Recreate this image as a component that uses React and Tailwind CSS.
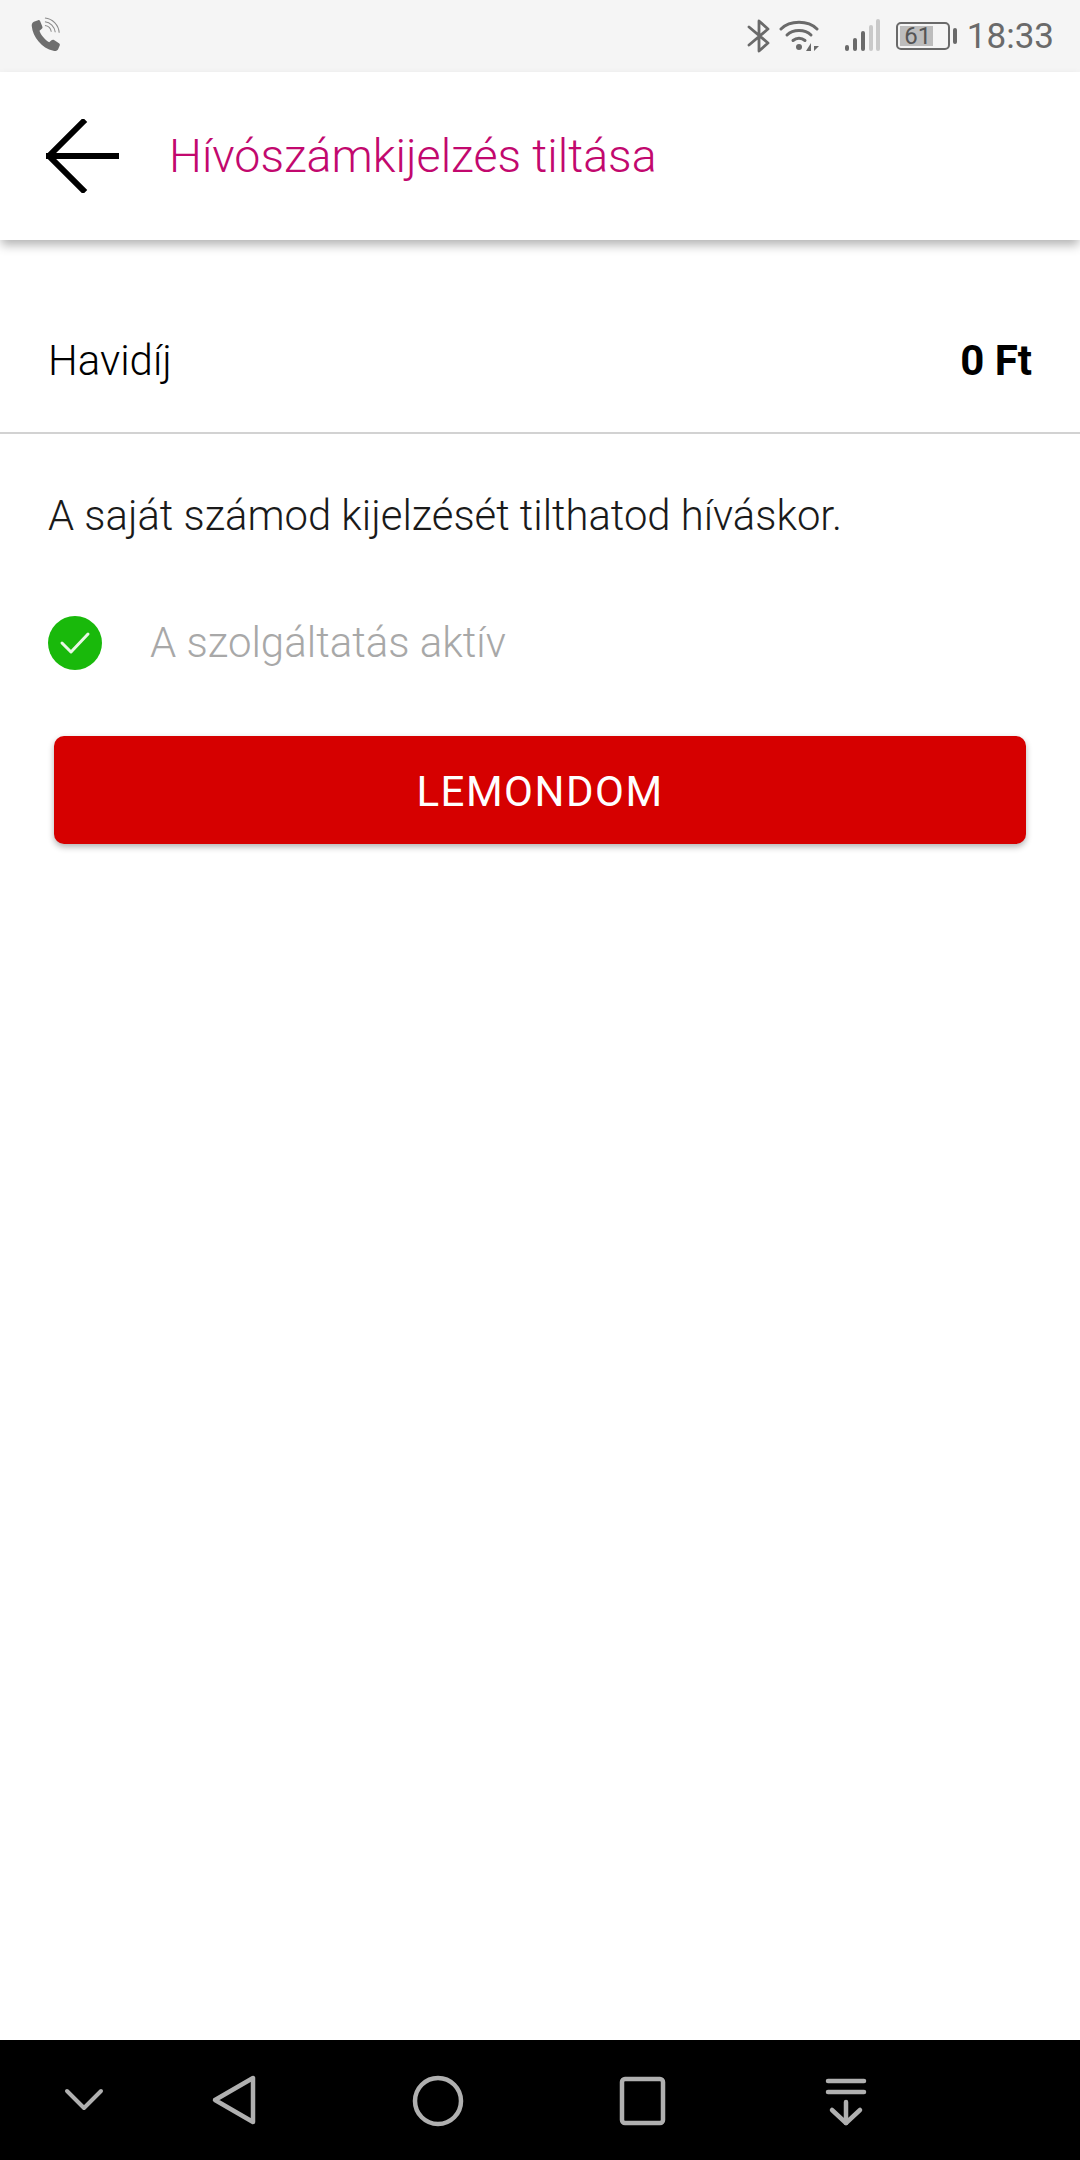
import React from "react";

// Felső állapotsor ikonjai
const CallIcon = () => (
  <svg width="38" height="38" viewBox="0 0 36 36" fill="none">
    <path d="M6.5 4.5 L10.5 3 C11.5 2.7 12 3.2 12.5 4 L14.5 9 C15 10 14.5 10.8 13.8 11.4 L11.8 13 C13 16.8 16.8 21.5 21 24 L23.2 22 C24 21.3 24.8 21.3 25.6 21.8 L30.3 24.8 C31.2 25.4 31.3 26.2 31 27 L29.5 30.5 C28.8 32 27 32.5 25 32 C14 29.5 5.5 19 4.5 8.5 C4.3 6.8 5 5.2 6.5 4.5 Z" fill="#6e6e6e" />
    <path d="M17 8 C20 8.3 22.5 10.5 23 14" stroke="#8a8a8a" strokeWidth="1" />
    <path d="M17 4.5 C22 5 26.2 9 26.8 14.5" stroke="#8a8a8a" strokeWidth="1" />
    <path d="M17 1 C24 1.5 30 7.5 30.5 15" stroke="#8a8a8a" strokeWidth="1" />
  </svg>
);

const BluetoothIcon = () => (
  <svg width="24" height="36" viewBox="0 0 24 36" fill="none" stroke="#6a6a6a" strokeWidth="2.8" strokeLinejoin="round" strokeLinecap="round">
    <path d="M2 9 L21 25 L12 33 L12 3 L21 11 L2 27" />
  </svg>
);

const WifiIcon = () => (
  <svg width="42" height="34" viewBox="0 0 42 34" fill="none">
    <path d="M2 10 C11 1 29 1 38 10" stroke="#6a6a6a" strokeWidth="3" strokeLinecap="round" />
    <path d="M8 16 C14 10 26 10 32 16" stroke="#6a6a6a" strokeWidth="3" strokeLinecap="round" />
    <path d="M14 21.5 C17.5 18.5 22.5 18.5 26 21.5" stroke="#6a6a6a" strokeWidth="3" strokeLinecap="round" />
    <circle cx="20" cy="28" r="3" fill="#6a6a6a" />
    <path d="M32 24 V32 H27 Z" fill="#6a6a6a" />
    <path d="M35 24 V32 L40 27 H35 Z" fill="#6a6a6a" />
  </svg>
);

const SignalIcon = () => (
  <svg width="36" height="36" viewBox="0 0 36 36">
    <rect x="1" y="27" width="4" height="6" rx="2" fill="#6a6a6a" />
    <rect x="9" y="20" width="4" height="13" rx="2" fill="#6a6a6a" />
    <rect x="17" y="13" width="4" height="20" rx="2" fill="#6a6a6a" />
    <rect x="25" y="7" width="4" height="26" rx="2" fill="#c9c9c9" />
    <rect x="32" y="1" width="4" height="32" rx="2" fill="#c9c9c9" />
  </svg>
);

// Alsó navigációs sáv ikonjai
const NavIcon = ({ children }) => (
  <svg width="60" height="60" viewBox="0 0 60 60" fill="none" stroke="#b0b0b0" strokeWidth="4.5" strokeLinecap="round" strokeLinejoin="round">
    {children}
  </svg>
);

const App = () => {
  return (
    <div className="w-[1080px] h-[2160px] bg-white flex flex-col font-['Roboto',sans-serif]">
      {/* Állapotsor */}
      <div className="h-[72px] bg-[#f5f5f5] flex items-center justify-between pl-[27px] pr-[26px]">
        <CallIcon />
        <div className="flex items-center">
          <BluetoothIcon />
          <div className="ml-[8px]"><WifiIcon /></div>
          <div className="ml-[23px]"><SignalIcon /></div>
          <div className="ml-[16px] w-[54px] h-[28px] border-2 border-[#6a6a6a] rounded-[5px] p-[2px] relative">
            <div className="w-[33px] h-full bg-[#bdbdbd]" />
            <span className="absolute inset-0 flex items-center justify-center pr-[10px] text-[24px] leading-none text-[#555]">61</span>
          </div>
          <div className="ml-[3px] w-[4px] h-[16px] bg-[#6a6a6a] rounded-sm" />
          <span className="ml-[10px] text-[35px] leading-none text-[#6a6a6a]">18:33</span>
        </div>
      </div>

      {/* Fejléc */}
      <div className="h-[168px] flex items-center pl-[46px] shadow-[0_6px_10px_-1px_rgba(0,0,0,0.3)] bg-white relative">
        <svg width="74" height="74" viewBox="0 0 74 74" fill="none" stroke="#000" strokeWidth="6" strokeLinecap="square">
          <path d="M37 3 L3 37 L37 71" />
          <path d="M3 37 H70" />
        </svg>
        <h1 className="ml-[49px] text-[46.5px] leading-none font-light text-[#c2086e]">Hívószámkijelzés tiltása</h1>
      </div>

      {/* Havidíj sor */}
      <div className="h-[194px] border-b-2 border-[#d2d2d2] flex items-end justify-between px-[48px] pb-[46px]">
        <span className="text-[42px] leading-[50px] font-light text-black">Havidíj</span>
        <span className="text-[42px] leading-[50px] font-bold text-black">0 Ft</span>
      </div>

      {/* Leírás és állapot */}
      <p className="mt-[57px] px-[48px] text-[41.8px] leading-[50px] font-light text-[#1a1a1a]">
        A saját számod kijelzését tilthatod híváskor.
      </p>
      <div className="mt-[75px] flex items-center px-[48px]">
        <div className="w-[54px] h-[54px] rounded-full bg-[#19b90b] flex items-center justify-center">
          <svg width="32" height="24" viewBox="0 0 32 24" fill="none" stroke="#e9f7e5" strokeWidth="3" strokeLinecap="round" strokeLinejoin="round">
            <path d="M3 12 L12 21 L29 3" />
          </svg>
        </div>
        <span className="ml-[48px] text-[42px] leading-[50px] font-light text-[#a8a8a8]">A szolgáltatás aktív</span>
      </div>

      {/* Gomb */}
      <div className="mt-[66px] px-[54px]">
        <button className="w-full h-[108px] pt-[3px] bg-[#d60000] rounded-[10px] shadow-[0_3px_6px_rgba(0,0,0,0.3)] text-white text-[42px] font-normal tracking-[1.5px]">
          LEMONDOM
        </button>
      </div>

      <div className="flex-1" />

      {/* Navigációs sáv */}
      <div className="h-[120px] bg-black relative">
        <div className="absolute left-[54px] top-[30px]">
          <NavIcon><path d="M13 21 L30 38 L47 21" strokeWidth="4" /></NavIcon>
        </div>
        <div className="absolute left-[201px] top-[30px]">
          <NavIcon><path d="M52 8 L52 52 L14 30 Z" /></NavIcon>
        </div>
        <div className="absolute left-[408px] top-[30px]">
          <NavIcon><circle cx="30" cy="31" r="23" /></NavIcon>
        </div>
        <div className="absolute left-[612px] top-[30px]">
          <NavIcon><rect x="10" y="9" width="41" height="44" rx="3" /></NavIcon>
        </div>
        <div className="absolute left-[816px] top-[30px]">
          <NavIcon>
            <path d="M12 11 H48" />
            <path d="M12 22 H48" />
            <path d="M30 32 V53" />
            <path d="M16 40 L30 53 L44 40" />
          </NavIcon>
        </div>
      </div>
    </div>
  );
};

export default App;
